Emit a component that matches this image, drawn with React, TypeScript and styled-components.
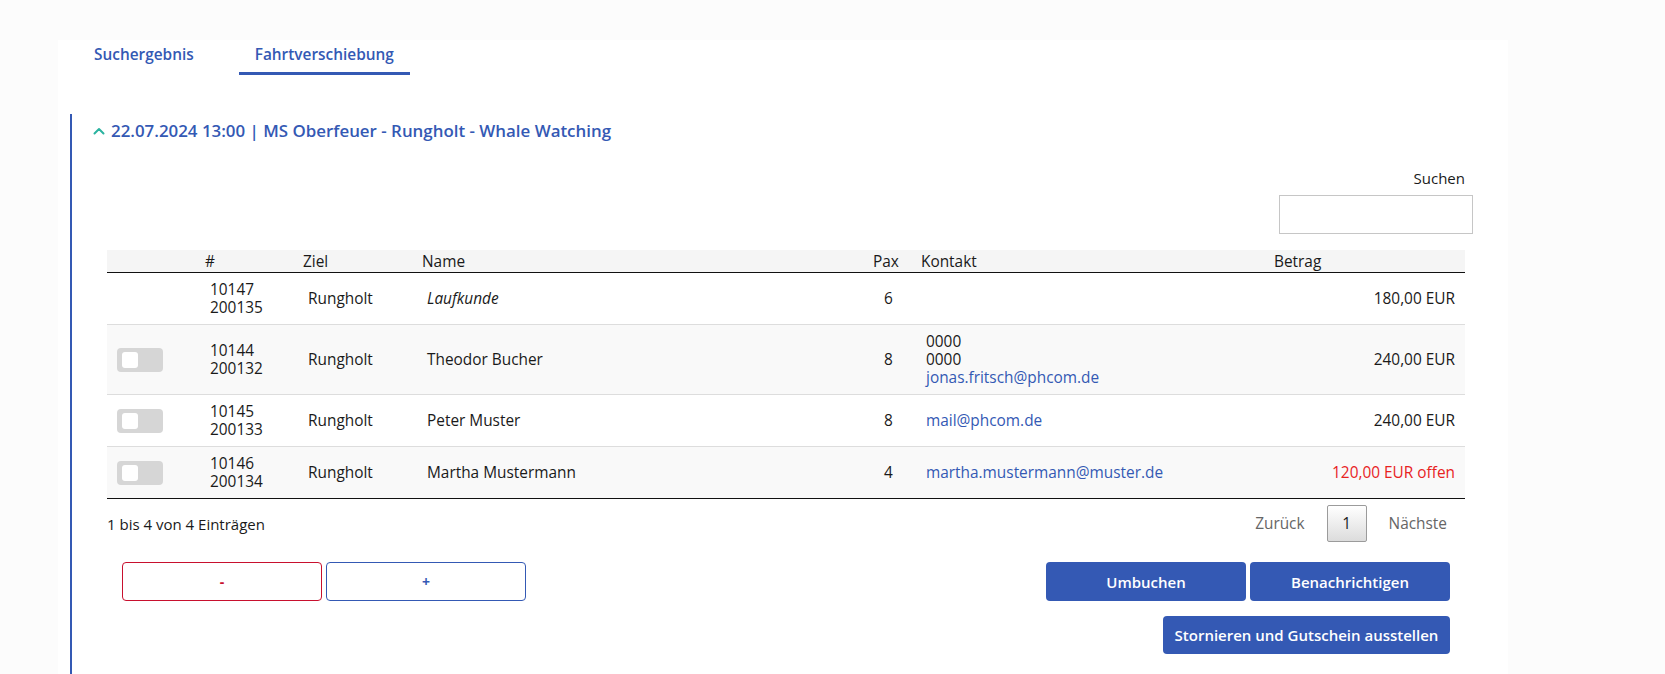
import React from "react";
import styled, { createGlobalStyle } from "styled-components";

const GlobalStyle = createGlobalStyle`
  html, body {
    margin: 0;
    padding: 0;
    background: #fcfcfc;
    font-family: "Open Sans", "Liberation Sans", sans-serif;
    color: #1a1a1a;
  }
  * { box-sizing: border-box; }
`;

const colors = {
  blue: "#3459b4",
  red: "#c8102e",
  teal: "#2bb3a0",
  grayRow: "#f9f9f9",
  line: "#dddddd",
};

type Booking = {
  id: string;
  nr: string;
  ziel: string;
  name: string;
  walkIn?: boolean;
  pax: number;
  contact: { text: string; mail?: boolean }[];
  amount: string;
  open?: boolean;
  toggle: boolean;
};

const bookings: Booking[] = [
  { id: "10147", nr: "200135", ziel: "Rungholt", name: "Laufkunde", walkIn: true, pax: 6, contact: [], amount: "180,00 EUR", toggle: false },
  {
    id: "10144",
    nr: "200132",
    ziel: "Rungholt",
    name: "Theodor Bucher",
    pax: 8,
    contact: [{ text: "0000" }, { text: "0000" }, { text: "jonas.fritsch@phcom.de", mail: true }],
    amount: "240,00 EUR",
    toggle: true,
  },
  { id: "10145", nr: "200133", ziel: "Rungholt", name: "Peter Muster", pax: 8, contact: [{ text: "mail@phcom.de", mail: true }], amount: "240,00 EUR", toggle: true },
  {
    id: "10146",
    nr: "200134",
    ziel: "Rungholt",
    name: "Martha Mustermann",
    pax: 4,
    contact: [{ text: "martha.mustermann@muster.de", mail: true }],
    amount: "120,00 EUR offen",
    open: true,
    toggle: true,
  },
];

export default function App() {
  return (
    <>
      <GlobalStyle />
      <Page>
        <Panel>
          <Tabs>
            <Tab>Suchergebnis</Tab>
            <Tab active>Fahrtverschiebung</Tab>
          </Tabs>
          <Section>
            <SectionTitle>
              <svg width="12" height="8" viewBox="0 0 12 8" fill="none">
                <path d="M1.5 6.5L6 2l4.5 4.5" stroke={colors.teal} strokeWidth="2" strokeLinecap="round" strokeLinejoin="round" />
              </svg>
              22.07.2024 13:00 | MS Oberfeuer - Rungholt - Whale Watching
            </SectionTitle>
            <Body>
              <Filter>
                <span>Suchen</span>
                <SearchInput type="text" />
              </Filter>
              <Table>
                <HeadRow>
                  <Th />
                  <Th>#</Th>
                  <Th>Ziel</Th>
                  <Th>Name</Th>
                  <Th align="center">Pax</Th>
                  <Th>Kontakt</Th>
                  <Th>Betrag</Th>
                </HeadRow>
                {bookings.map((b, i) => (
                  <Row key={b.id} striped={i % 2 === 1}>
                    <Td>{b.toggle && <Toggle />}</Td>
                    <Td>
                      <div>{b.id}</div>
                      <div>{b.nr}</div>
                    </Td>
                    <Td>{b.ziel}</Td>
                    <Td italic={b.walkIn}>{b.name}</Td>
                    <Td align="center">{b.pax}</Td>
                    <Td>
                      {b.contact.map((c, j) =>
                        c.mail ? <Mail key={j}>{c.text}</Mail> : <div key={j}>{c.text}</div>,
                      )}
                    </Td>
                    <Td align="right" danger={b.open}>
                      {b.amount}
                    </Td>
                  </Row>
                ))}
              </Table>
              <TableFooter>
                <span>1 bis 4 von 4 Einträgen</span>
                <Pager>
                  <PageLink>Zurück</PageLink>
                  <PageButton>1</PageButton>
                  <PageLink>Nächste</PageLink>
                </Pager>
              </TableFooter>
              <Actions>
                <ButtonGroup>
                  <OutlineButton tone="red">-</OutlineButton>
                  <OutlineButton tone="blue">+</OutlineButton>
                </ButtonGroup>
                <RightButtons>
                  <ButtonGroup>
                    <PrimaryButton>Umbuchen</PrimaryButton>
                    <PrimaryButton>Benachrichtigen</PrimaryButton>
                  </ButtonGroup>
                  <PrimaryButton wide>Stornieren und Gutschein ausstellen</PrimaryButton>
                </RightButtons>
              </Actions>
            </Body>
          </Section>
        </Panel>
      </Page>
    </>
  );
}

const Page = styled.div`
  padding: 40px 157px 0 58px;
  min-height: 674px;
`;

const Panel = styled.div`
  background: #ffffff;
  min-height: 634px;
  padding-left: 20px;
  padding-right: 43px;
`;

const Tabs = styled.div`
  display: flex;
  gap: 29px;
`;

const Tab = styled.div<{ active?: boolean }>`
  padding: 5px 16px 7px;
  font-size: 15.4px;
  line-height: 20px;
  font-weight: 600;
  color: ${colors.blue};
  border-bottom: 3px solid ${(p) => (p.active ? colors.blue : "transparent")};
`;

const Section = styled.div`
  margin-top: 39px;
  margin-left: -8px;
  border-left: 2px solid ${colors.blue};
  padding-left: 21px;
  padding-bottom: 20px;
`;

const SectionTitle = styled.div`
  display: flex;
  align-items: center;
  gap: 6px;
  padding-top: 6px;
  font-size: 16.9px;
  line-height: 22px;
  font-weight: 600;
  color: ${colors.blue};
`;

const Body = styled.div`
  padding-left: 14px;
`;

const Filter = styled.div`
  display: flex;
  flex-direction: column;
  align-items: flex-end;
  gap: 7px;
  margin-top: 26px;
  margin-right: -8px;
  font-size: 15px;
  span {
    margin-right: 8px;
  }
`;

const SearchInput = styled.input`
  width: 194px;
  height: 39px;
  border: 1px solid #c6c6c6;
  background: #ffffff;
  outline: none;
`;

const grid = `
  display: grid;
  grid-template-columns: 88px 98px 119px 449px 50px 353px 1fr;
`;

const Table = styled.div`
  margin-top: 16px;
  border-bottom: 1px solid #111;
`;

const HeadRow = styled.div`
  ${grid};
  background: #f5f5f5;
  border-bottom: 1px solid #111;
`;

const Th = styled.div<{ align?: string }>`
  padding: 2px 10px 1px;
  font-size: 15.4px;
  line-height: 19px;
  text-align: ${(p) => p.align || "left"};
`;

const Row = styled.div<{ striped?: boolean }>`
  ${grid};
  background: ${(p) => (p.striped ? colors.grayRow : "#ffffff")};
  & + & {
    border-top: 1px solid ${colors.line};
  }
`;

const Td = styled.div<{ align?: string; italic?: boolean; danger?: boolean }>`
  display: flex;
  flex-direction: column;
  justify-content: center;
  align-items: ${(p) => (p.align === "right" ? "flex-end" : p.align === "center" ? "center" : "flex-start")};
  padding: 7.5px 10px 7.5px 15px;
  font-size: 15.4px;
  line-height: 18px;
  font-style: ${(p) => (p.italic ? "italic" : "normal")};
  color: ${(p) => (p.danger ? "#e8231f" : "#1a1a1a")};
`;

const Mail = styled.div`
  color: ${colors.blue};
`;

const Toggle = styled.span`
  display: block;
  width: 46px;
  height: 24px;
  margin-left: -5px;
  border-radius: 4px;
  background: #d6d6d6;
  position: relative;
  &::after {
    content: "";
    position: absolute;
    left: 5px;
    top: 4px;
    width: 16px;
    height: 16px;
    border-radius: 3px;
    background: #ffffff;
  }
`;

const TableFooter = styled.div`
  display: flex;
  justify-content: space-between;
  align-items: center;
  padding-top: 6px;
  font-size: 15px;
`;

const Pager = styled.div`
  display: flex;
  align-items: center;
  gap: 22px;
  margin-right: 18px;
`;

const PageLink = styled.span`
  color: #666666;
  font-size: 15.4px;
`;

const PageButton = styled.span`
  display: flex;
  align-items: center;
  justify-content: center;
  width: 40px;
  height: 37px;
  border: 1px solid #9b9b9b;
  border-radius: 2px;
  background: linear-gradient(#ffffff, #dcdcdc);
  color: #222;
  font-size: 15.4px;
`;

const Actions = styled.div`
  display: flex;
  justify-content: space-between;
  align-items: flex-start;
  margin-top: 20px;
  padding: 0 15px;
`;

const ButtonGroup = styled.div`
  display: flex;
  gap: 4px;
`;

const RightButtons = styled.div`
  display: flex;
  flex-direction: column;
  align-items: flex-end;
  gap: 15px;
`;

const OutlineButton = styled.button<{ tone: "red" | "blue" }>`
  width: 200px;
  height: 39px;
  border-radius: 4px;
  background: #ffffff;
  border: 1px solid ${(p) => (p.tone === "red" ? colors.red : colors.blue)};
  color: ${(p) => (p.tone === "red" ? colors.red : colors.blue)};
  font-family: inherit;
  font-weight: 700;
  font-size: 14px;
`;

const PrimaryButton = styled.button<{ wide?: boolean }>`
  width: ${(p) => (p.wide ? "287px" : "200px")};
  height: ${(p) => (p.wide ? "38px" : "39px")};
  border: none;
  border-radius: 4px;
  background: ${colors.blue};
  color: #ffffff;
  font-family: inherit;
  font-weight: 600;
  font-size: 15px;
`;
